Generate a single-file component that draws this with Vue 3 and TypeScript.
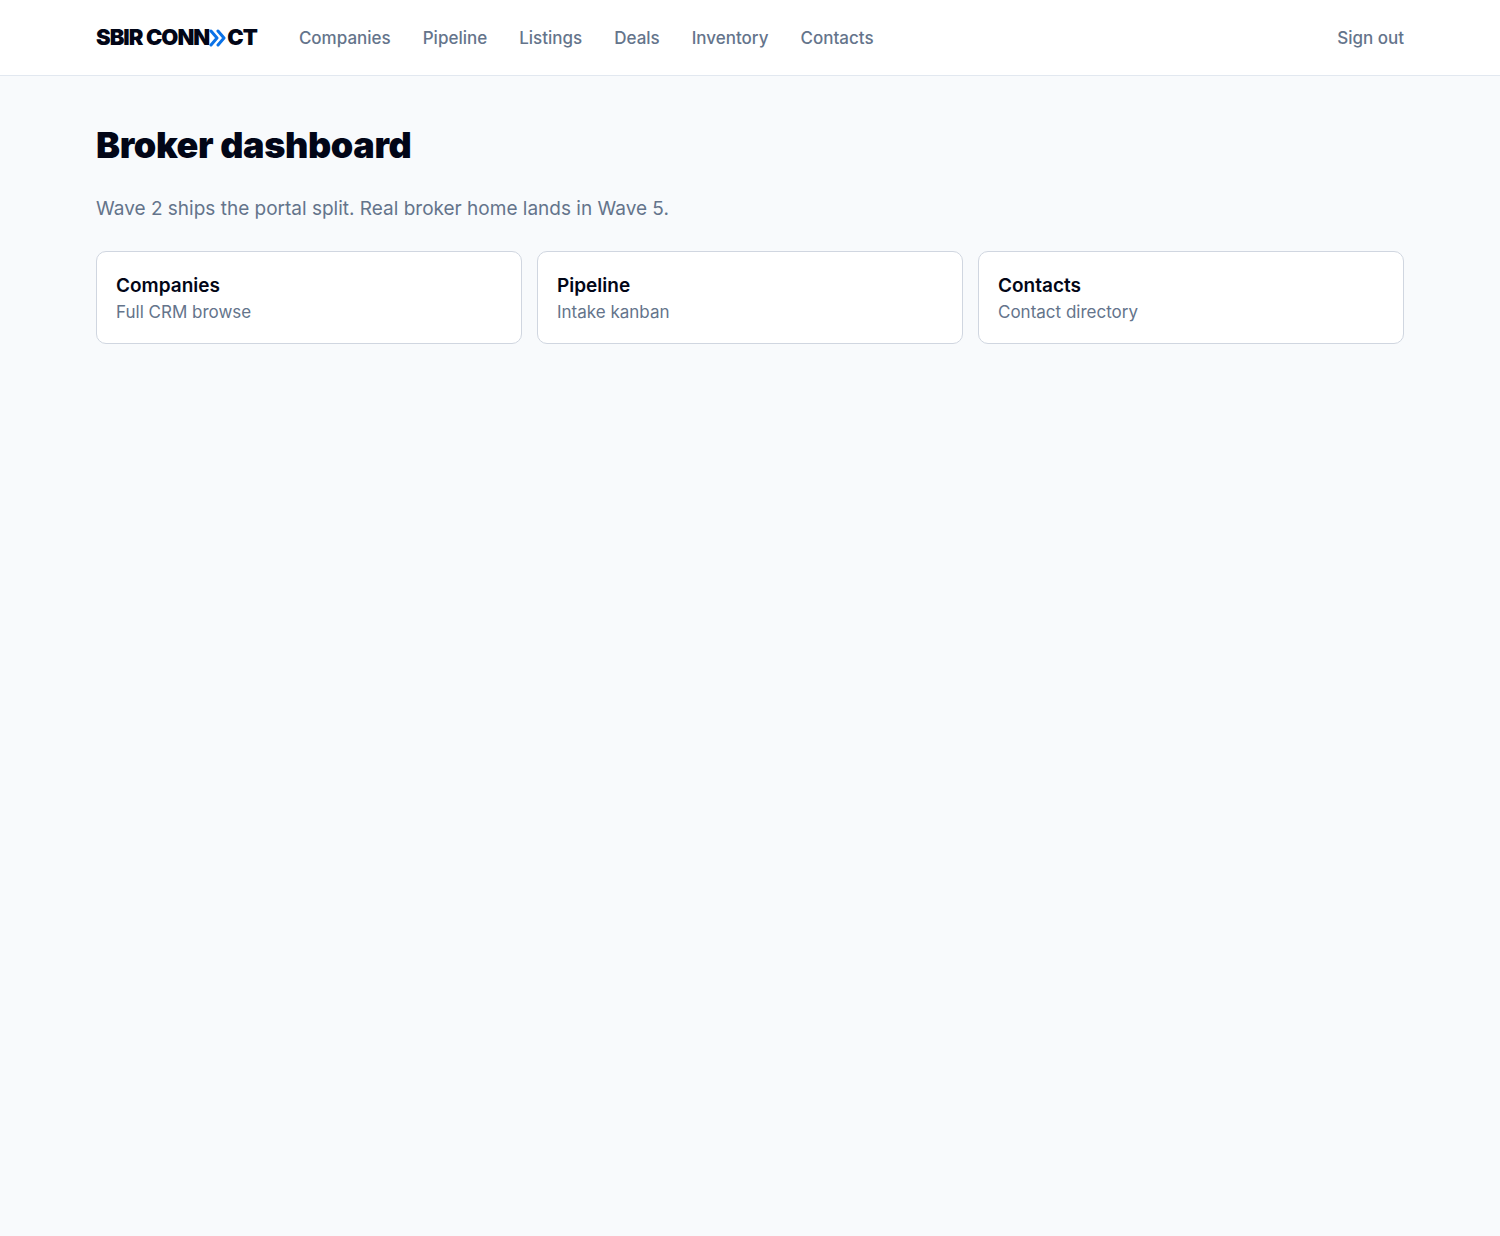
<script setup lang="ts">
interface NavLink {
  label: string
  href: string
}

interface Shortcut {
  title: string
  description: string
  href: string
}

const navLinks: NavLink[] = [
  { label: 'Companies', href: '#companies' },
  { label: 'Pipeline', href: '#pipeline' },
  { label: 'Listings', href: '#listings' },
  { label: 'Deals', href: '#deals' },
  { label: 'Inventory', href: '#inventory' },
  { label: 'Contacts', href: '#contacts' },
]

const shortcuts: Shortcut[] = [
  { title: 'Companies', description: 'Full CRM browse', href: '#companies' },
  { title: 'Pipeline', description: 'Intake kanban', href: '#pipeline' },
  { title: 'Contacts', description: 'Contact directory', href: '#contacts' },
]
</script>

<template>
  <div class="page">
    <header class="topbar">
      <a class="brand" href="#home">
        <span>SBIR CONN</span>
        <svg class="brand-mark" viewBox="0 0 18 18" aria-hidden="true">
          <path d="M2 2 8 9 2 16M9 2 15 9 9 16" />
        </svg>
        <span>CT</span>
      </a>
      <nav class="nav" aria-label="Main">
        <a v-for="link in navLinks" :key="link.label" class="nav-link" :href="link.href">{{ link.label }}</a>
      </nav>
      <button class="sign-out" type="button">Sign out</button>
    </header>

    <main class="content">
      <h1 class="title">Broker dashboard</h1>
      <p class="intro">Wave 2 ships the portal split. Real broker home lands in Wave 5.</p>
      <div class="cards">
        <a v-for="card in shortcuts" :key="card.title" class="card" :href="card.href">
          <span class="card-title">{{ card.title }}</span>
          <span class="card-text">{{ card.description }}</span>
        </a>
      </div>
    </main>
  </div>
</template>

<style>
body {
  background: #f8fafc;
}
</style>

<style scoped>
.page {
  min-height: 100vh;
  background: #f8fafc;
  color: #020617;
  font-family: Inter, sans-serif;
}

.topbar {
  display: flex;
  align-items: center;
  padding: 24px 96px;
  border-bottom: 1px solid #e2e8f0;
  background: #fff;
}

.brand {
  display: flex;
  align-items: center;
  margin-right: 42px;
  color: #020617;
  font-size: 22px;
  font-weight: 900;
  line-height: 27px;
  letter-spacing: -0.045em;
  text-decoration: none;
  white-space: pre;
}

.brand-mark {
  width: 18px;
  height: 18px;
  fill: none;
  stroke: #0b72e7;
  stroke-width: 3;
  stroke-linecap: round;
  stroke-linejoin: round;
}

.nav {
  display: flex;
  gap: 32px;
}

.nav-link,
.sign-out {
  color: #64748b;
  font-size: 17px;
  font-weight: 500;
  line-height: 24px;
  text-decoration: none;
}

.sign-out {
  margin-left: auto;
  padding: 0;
  border: 0;
  background: none;
  font-family: inherit;
  cursor: pointer;
}

.content {
  padding: 48px 96px;
}

.title {
  margin: 0;
  font-size: 36px;
  font-weight: 900;
  line-height: 42px;
  letter-spacing: -0.01em;
}

.intro {
  margin: 29px 0 28px;
  color: #64748b;
  font-size: 19px;
  line-height: 28px;
}

.cards {
  display: grid;
  grid-template-columns: repeat(3, 1fr);
  gap: 15px;
}

.card {
  display: flex;
  flex-direction: column;
  padding: 20px 19px 19px;
  border: 1px solid #d0d6e0;
  border-radius: 10px;
  background: #fff;
  color: inherit;
  text-decoration: none;
}

.card-title {
  font-size: 19px;
  font-weight: 600;
  line-height: 28px;
}

.card-text {
  color: #64748b;
  font-size: 17px;
  line-height: 24px;
}
</style>
